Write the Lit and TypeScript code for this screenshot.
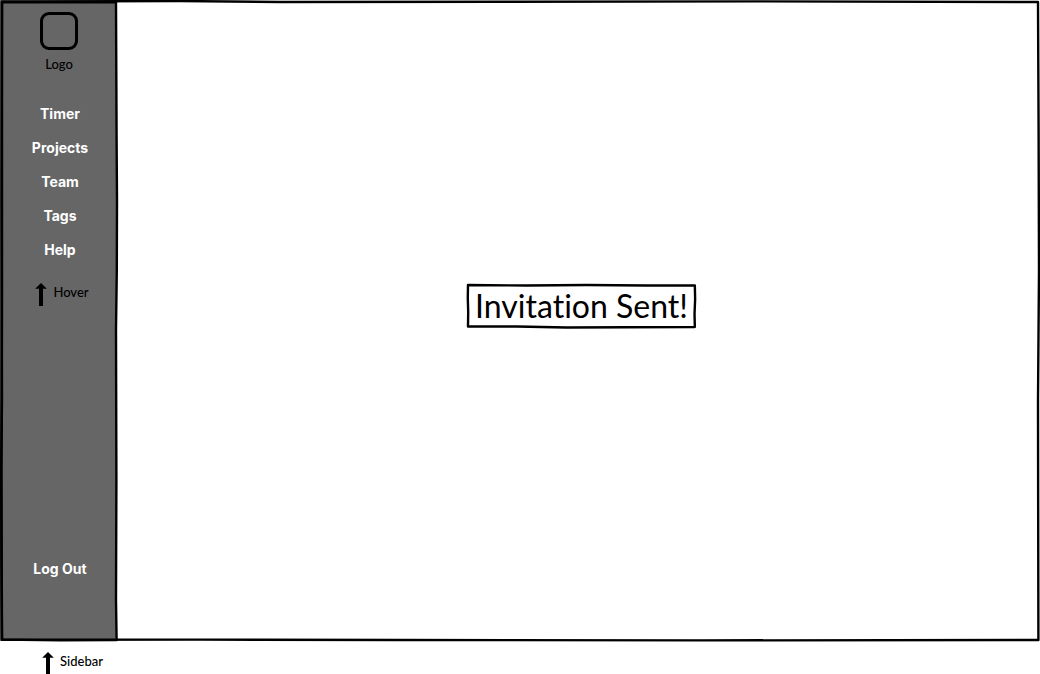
import { LitElement, html, css, svg } from "lit";
import { customElement, property } from "lit/decorators.js";

/** Hand-drawn outline that stretches over its positioned parent. */
@customElement("sketch-outline")
class SketchOutline extends LitElement {
  @property() variant = "frame";

  static styles = css`
    :host {
      position: absolute;
      inset: 0;
      pointer-events: none;
    }
    svg {
      display: block;
      width: 100%;
      height: 100%;
      overflow: visible;
    }
    path {
      fill: none;
      stroke: #000;
      stroke-linecap: round;
      stroke-linejoin: round;
      stroke-width: 2.4px;
      vector-effect: non-scaling-stroke;
    }
  `;

  private shape() {
    switch (this.variant) {
      case "panel":
        return {
          box: "0 0 117 641",
          d: "M2 2L60 2.4L116 2L116.6 140L117 200L116.8 270L116 330L116.4 480L116 600L116.6 640L60 640.4L2 639.6L1.4 560L1.2 470L2 400L1.6 200Z",
        };
      case "label":
        return {
          box: "0 0 230 44",
          d: "M1 1L60 1.5L120 1L180 1.5L229 1.5L229.3 15L228.7 30L229 43L160 43.3L100 43.5L50 42.5L1 42.5L1.2 28L.8 14Z",
        };
      default:
        return {
          box: "0 0 1040 641",
          d: "M2 1.6L180 1L280 2L500 1.8L760 1.4L1038 2L1038.6 130L1039 270L1038 400L1038.4 640L700 640.4L400 640L200 639.6L2 639.8L1.4 470L2 300Z",
        };
    }
  }

  render() {
    const { box, d } = this.shape();
    return html`<svg viewBox=${box} preserveAspectRatio="none" aria-hidden="true">
      ${svg`<path d=${d}></path>`}
    </svg>`;
  }
}

@customElement("app-root")
class AppRoot extends LitElement {
  static styles = css`
    :host {
      display: flex;
      flex-direction: column;
      min-height: 100vh;
      box-sizing: border-box;
      background: #fff;
      color: #000;
      font-family: Lato, "Open Sans", sans-serif;
      font-size: 13px;
      font-weight: 500;
      font-variant-ligatures: none;
      line-height: 18px;
    }
    .frame {
      position: relative;
      display: flex;
      flex: 1;
    }
    .sidebar {
      position: relative;
      display: flex;
      flex-direction: column;
      align-items: center;
      box-sizing: border-box;
      width: 117px;
      padding: 12px 0 63px 1px;
      background: #666;
    }
    .logo {
      display: flex;
      flex-direction: column;
      align-items: center;
      gap: 5px;
      margin-bottom: 32px;
    }
    .logo-mark {
      box-sizing: border-box;
      width: 38px;
      height: 38px;
      border: 3px solid #000;
      border-radius: 9px;
    }
    .nav {
      display: flex;
      flex-direction: column;
      align-items: center;
      gap: 16px;
      padding-left: 2px;
    }
    .link {
      color: #fff;
      font-family: Inter, Lato, sans-serif;
      font-size: 14px;
      font-weight: 700;
      line-height: 18px;
      text-decoration: none;
    }
    .logout {
      margin-top: auto;
      padding: 0 0 0 2px;
      border: 0;
      background: none;
      cursor: pointer;
    }
    .note {
      display: flex;
      align-items: flex-start;
      gap: 6px;
    }
    .hover {
      margin: 24px 0 0 6px;
    }
    .caption {
      padding: 11px 0 0 42px;
      height: 22px;
      overflow: hidden;
    }
    .arrow {
      display: block;
      width: 12px;
      height: 24px;
    }
    .content {
      display: flex;
      flex: 1;
      align-items: center;
      justify-content: center;
      padding: 0 0 30px 6px;
    }
    .message {
      position: relative;
      margin: 0;
      padding: 2px 8px;
      font-size: 32px;
      font-weight: 400;
      line-height: 40px;
      white-space: nowrap;
    }
  `;

  private links = ["Timer", "Projects", "Team", "Tags", "Help"];

  private arrow() {
    return html`<svg class="arrow" viewBox="0 0 12 24" aria-hidden="true">
      <path d="M6 0L11.8 5.8H8V23H4V5.8H.2Z"></path>
    </svg>`;
  }

  render() {
    return html`
      <div class="frame">
        <aside class="sidebar">
          <div class="logo">
            <div class="logo-mark"></div>
            <span>Logo</span>
          </div>
          <nav class="nav">
            ${this.links.map((name) => html`<a class="link" href="#">${name}</a>`)}
          </nav>
          <div class="note hover">${this.arrow()}<span>Hover</span></div>
          <button class="link logout" type="button">Log Out</button>
          <sketch-outline variant="panel"></sketch-outline>
        </aside>
        <main class="content">
          <h1 class="message">
            Invitation Sent!<sketch-outline variant="label"></sketch-outline>
          </h1>
        </main>
        <sketch-outline></sketch-outline>
      </div>
      <div class="note caption">${this.arrow()}<span>Sidebar</span></div>
    `;
  }
}
